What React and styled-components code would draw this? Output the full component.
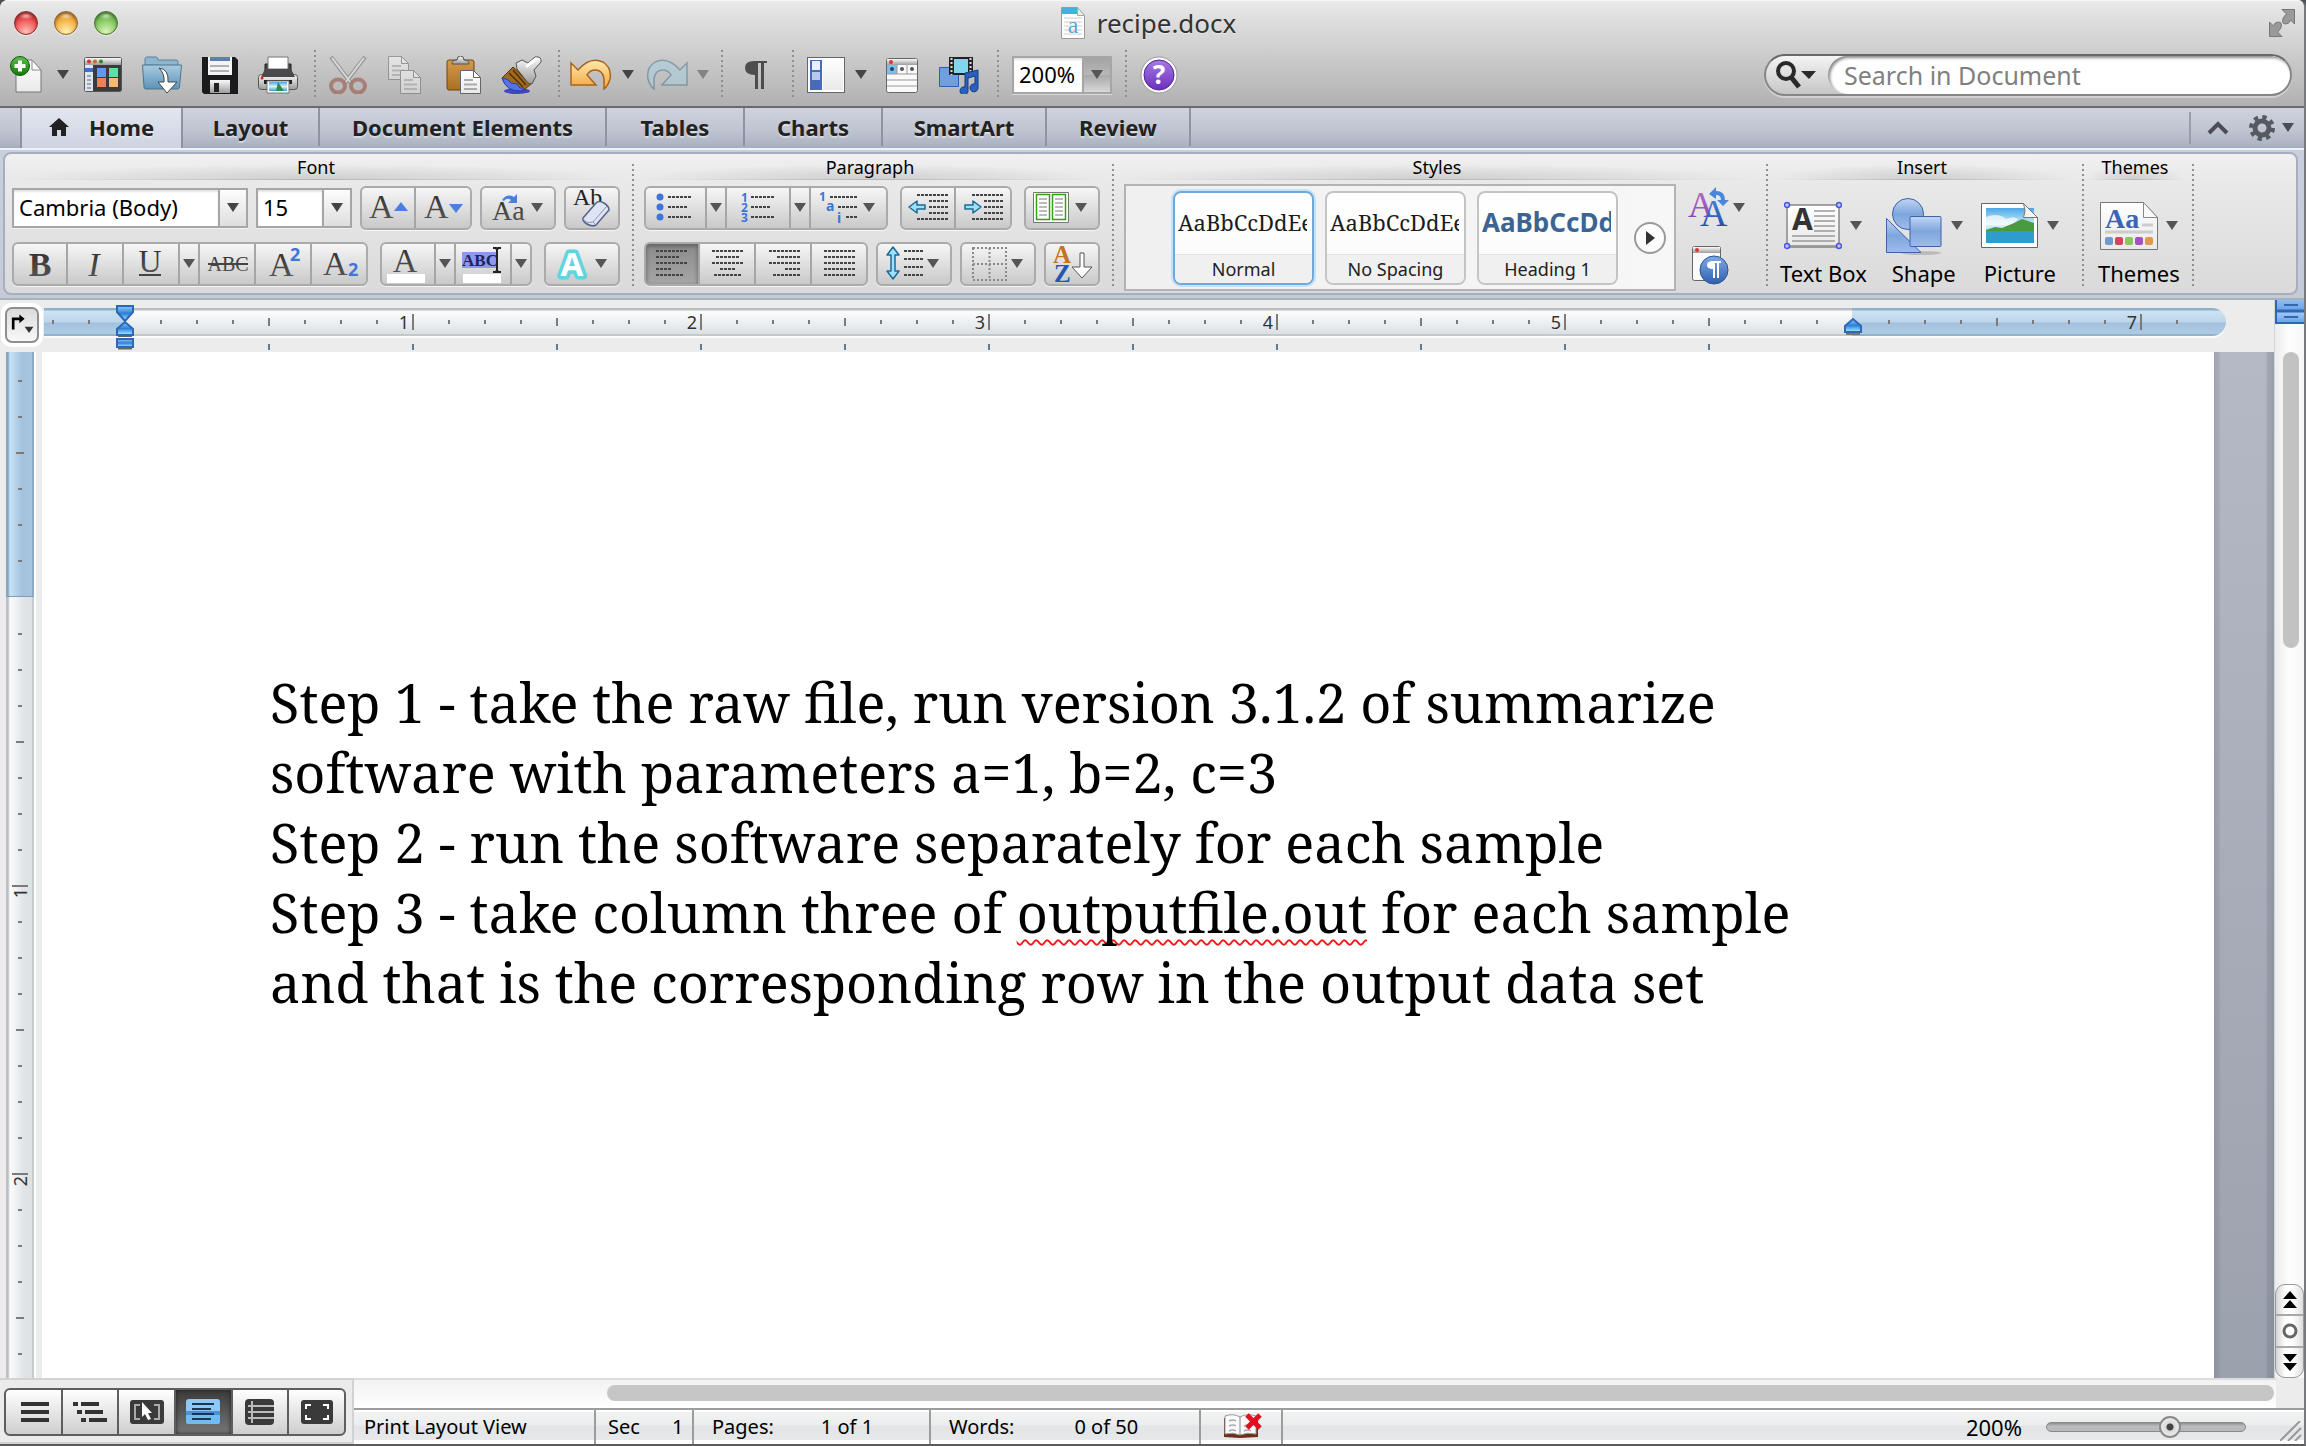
import React from 'react';
import styled, { createGlobalStyle, css } from 'styled-components';

const UI = '"Noto Sans", "Open Sans", sans-serif';
const SERIF = '"Liberation Serif", serif';
const DOC = '"Noto Serif", "DejaVu Serif Condensed", "DejaVu Serif", serif';

const GlobalStyle = createGlobalStyle`
  *, *::before, *::after { box-sizing: border-box; }
  body { margin: 0; font-family: ${UI}; color: #000; background: #4c5157; }
  button, input { font-family: inherit; color: inherit; margin: 0; }
  button { border: 0; padding: 0; background: none; }
  svg { display: block; flex: none; }
`;

const Window = styled.div`
  display: flex;
  flex-direction: column;
  height: 100vh;
  border-right: 2px solid #77797c;
  border-bottom: 2px solid #5c5c5e;
  border-radius: 8px 8px 0 0;
  overflow: hidden;
  background: #ececec;
`;

/* ---------- title bar and toolbar ---------- */

const Header = styled.header`
  background: linear-gradient(#ececec 0, #e4e4e4 8px, #b1b1b1 100%);
  border-top: 1px solid #f7f7f7;
  border-bottom: 2px solid #6a6a6a;
`;

const TitleBar = styled.div`
  display: grid;
  grid-template-columns: 1fr auto 1fr;
  align-items: center;
  height: 43px;
  padding: 0 9px 0 14px;
`;

const Lights = styled.div`
  display: flex;
  gap: 16px;
`;

const Light = styled.button`
  width: 24px;
  height: 24px;
  border-radius: 50%;
  border: 1px solid ${(p) => p.$edge};
  background: radial-gradient(ellipse 8px 4px at 50% 15%, #ffffffc0, #ffffff00),
    radial-gradient(circle at 50% 90%, ${(p) => p.$glow} 0, ${(p) => p.$tone} 60%, ${(p) => p.$edge} 110%);
  box-shadow: inset 0 2px 3px ${(p) => p.$edge}, 0 1px 0 #ffffff90;
`;

const Title = styled.h1`
  display: flex;
  align-items: center;
  gap: 12px;
  margin: 0;
  padding-right: 12px;
  font-size: 26px;
  line-height: 36px;
  font-weight: 400;
  color: #333;
  text-shadow: 0 1px 0 #ffffff80;
`;

const FullScreen = styled.button`
  justify-self: end;
`;

const Toolbar = styled.div`
  display: flex;
  align-items: center;
  height: 62px;
  padding-right: 12px;
`;

const Tool = styled.button`
  flex: none;
  display: flex;
  align-items: center;
  justify-content: center;
  width: ${(p) => p.$w}px;
  height: 50px;
  opacity: ${(p) => (p.disabled ? 0.5 : 1)};
`;

const dots = css`
  width: 2px;
  background: repeating-linear-gradient(#8e8e8e 0 2px, transparent 2px 5px);
`;

const ToolSplit = styled.span`
  flex: none;
  display: flex;
  justify-content: center;
  width: ${(p) => p.$w}px;
  height: 50px;
  &::before { content: ''; ${dots} }
`;

const Combo = styled.div`
  display: flex;
  flex: none;
  width: ${(p) => p.$w}px;
  height: ${(p) => (p.$tool ? 38 : 40)}px;
  margin-left: ${(p) => (p.$tool ? 7 : 0)}px;
  border: 2px solid #a6a6a6;
  background: #fff;
  box-shadow: 0 1px 0 #ffffff80;
`;

const ComboInput = styled.input`
  flex: 1;
  min-width: 0;
  width: 0;
  border: 0;
  outline: 0;
  padding: 0 0 2px 5px;
  font-size: 22px;
  background: none;
  box-shadow: inset 0 2px 2px #e4e4e4;
`;

const ComboButton = styled.button`
  display: flex;
  align-items: center;
  justify-content: center;
  width: 28px;
  border-left: 2px solid #a6a6a6;
  background: ${(p) => (p.$dark ? 'linear-gradient(#a4a4a4, #b8b8b8 50%, #a9a9a9 51%, #d8d8d8)' : 'linear-gradient(#fdfdfd, #dedede)')};
`;

const Spacer = styled.div`
  flex: 1;
`;

const Search = styled.div`
  display: flex;
  align-items: stretch;
  width: 528px;
  height: 42px;
  border: 2px solid #868686;
  border-top-color: #686868;
  border-radius: 21px;
  overflow: hidden;
  background: linear-gradient(#f4f4f4, #c6c6c6);
  box-shadow: 0 2px 0 #ffffff60;
`;

const SearchMenu = styled.button`
  display: flex;
  align-items: center;
  width: 62px;
  padding-left: 9px;
`;

const SearchInput = styled.input`
  flex: 1;
  min-width: 0;
  border: 0;
  outline: 0;
  border-radius: 19px;
  padding: 0 16px;
  font-size: 25px;
  background: #fff;
  box-shadow: inset 2px 2px 3px #8a8a8a;
  &::placeholder { color: #808080; opacity: 1; }
`;

/* ---------- ribbon tabs ---------- */

const Tabs = styled.nav`
  display: flex;
  height: 40px;
  padding-left: 20px;
  background: linear-gradient(#cfd3de, #bfc4d0 60%, #abb2c2);
  border-bottom: 2px solid #a6aec1;
`;

const Tab = styled.button`
  display: flex;
  align-items: center;
  justify-content: center;
  gap: 20px;
  width: ${(p) => p.$w}px;
  height: 38px;
  border-right: 2px solid #8d93a2;
  font-size: 22px;
  line-height: 30px;
  font-weight: 700;
  color: #222;
  text-shadow: 0 2px 0 #ffffff70;
  ${(p) => p.$on && css`
    height: 42px;
    padding-bottom: 4px;
    border-left: 2px solid #8d93a2;
    background: linear-gradient(#e2e6ef, #ccd2e0);
  `}
`;

const TabTools = styled.div`
  display: flex;
  align-items: center;
  gap: 20px;
  margin: 4px 10px 2px auto;
  padding-left: 16px;
  border-left: 2px solid #989eac;
`;

const TabTool = styled.button`
  display: flex;
  align-items: center;
  gap: 7px;
`;

/* ---------- ribbon ---------- */

const RibbonBack = styled.div`
  padding: 4px 6px 3px 3px;
  background: linear-gradient(#eef1f7 0 2px, #c8cfdd 2px, #c5cad7);
  border-bottom: 2px solid #a9b0be;
`;

const Ribbon = styled.div`
  display: flex;
  height: 143px;
  padding-left: 1px;
  border: 2px solid #a7aebf;
  border-radius: 8px;
  background: linear-gradient(#f0f0f0, #e9e9e9 20%, #dadada);
`;

const Group = styled.section`
  flex: none;
  width: ${(p) => p.$w}px;
`;

const GroupTitle = styled.h2`
  margin: 0 9px 0 3px;
  height: 26px;
  padding-top: 1px;
  font-size: 18px;
  line-height: 24px;
  font-weight: 400;
  text-align: center;
  border-bottom: 1px solid;
  border-image: linear-gradient(90deg, transparent, #b4b4b4 50%, transparent) 1;
  background: radial-gradient(ellipse 50% 60% at 50% 100%, #cfcfcf, transparent);
`;

const GroupDots = styled.span`
  ${dots}
  flex: none;
  margin-top: 10px;
  height: 124px;
`;

const Rows = styled.div`
  display: flex;
  flex-direction: column;
  gap: 12px;
  padding: 6px 0 0 ${(p) => p.$left}px;
`;

const Row = styled.div`
  display: flex;
  align-items: center;
  height: 44px;
  gap: ${(p) => p.$gap}px;
`;

const Segments = styled.div`
  display: flex;
  height: 44px;
  border: 2px solid #ababab;
  border-radius: 6px;
  overflow: hidden;
  background: linear-gradient(#f6f6f6, #c9c9c9);
  box-shadow: 0 1px 0 #ffffffa0;
`;

const Segment = styled.button`
  width: ${(p) => p.$w}px;
  height: 40px;
  border-right: 2px solid #a6a6a6;
  &:first-child { width: ${(p) => p.$w - 2}px; }
  &:last-child { border-right: 0; width: ${(p) => p.$w - 2}px; }
  &:only-child { width: ${(p) => p.$w - 4}px; }
  svg { margin-top: -2px; }
  &:first-child svg { margin-left: -2px; }
  ${(p) => p.$on && css`
    background: linear-gradient(#8a8a8a, #a6a6a6);
    box-shadow: inset 0 2px 4px #5d5d5d;
  `}
`;

const StyleRow = styled.div`
  display: flex;
  gap: 12px;
  padding: 4px 0 0 10px;
`;

const Gallery = styled.div`
  display: flex;
  align-items: center;
  gap: 11px;
  width: 552px;
  height: 107px;
  padding: 0 8px 0 47px;
  border: 2px solid #b3b3b3;
  background: linear-gradient(90deg, #f0f0f0, #f7f7f7);
`;

const Card = styled.button`
  display: flex;
  flex-direction: column;
  width: 141px;
  height: 94px;
  overflow: hidden;
  border: 2px solid ${(p) => (p.$on ? '#72a8d8' : '#c4c4c4')};
  border-radius: 8px;
  box-shadow: ${(p) => (p.$on ? '0 0 0 2px #c4e2f8' : 'none')};
  background: linear-gradient(#fff, #fafafa);
`;

const Sample = styled.span`
  align-self: stretch;
  height: 61px;
  margin: 0 5px 0 3px;
  padding-top: 8px;
  overflow: hidden;
  text-align: left;
  white-space: nowrap;
  font-family: ${(p) => (p.$head ? UI : DOC)};
  font-size: ${(p) => (p.$head ? 26 : 22)}px;
  font-weight: ${(p) => (p.$head ? 700 : 400)};
  color: ${(p) => (p.$head ? '#3c6492' : '#1c1c1c')};
  line-height: 42px;
`;

const CardName = styled.span`
  width: 100%;
  flex: 1;
  font-size: 18px;
  line-height: 28px;
  color: #222;
  border-top: 1px solid #e2e2e2;
  background: #f0f0f0;
`;

const More = styled.button`
  width: 32px;
  height: 32px;
  flex: none;
  margin-left: 5px;
  border: 2px solid #9a9a9a;
  border-radius: 50%;
  background: #fcfcfc;
  svg { margin: 0 0 0 10px; }
`;

const SideTools = styled.div`
  display: flex;
  flex-direction: column;
  gap: 12px;
  padding-top: 2px;
`;

const Plain = styled.button``;

const BigRow = styled.div`
  display: flex;
  gap: 18px;
  padding: 16px 0 0 ${(p) => p.$left}px;
`;

const Big = styled.button`
  display: flex;
  flex-direction: column;
  align-items: center;
  min-width: ${(p) => p.$w}px;
  font-size: 22px;
  line-height: 34px;
  white-space: nowrap;
`;

const BigTop = styled.span`
  display: flex;
  align-items: center;
  gap: 8px;
  height: 60px;
`;

/* ---------- rulers ---------- */

const Workspace = styled.div`
  display: flex;
  flex: 1;
  min-height: 0;
`;

const Sheet = styled.main`
  display: flex;
  flex-direction: column;
  flex: 1;
  min-width: 0;
`;

const RulerRow = styled.div`
  display: flex;
  height: 52px;
  padding-right: 48px;
  background: #ececec;
`;

const TabStop = styled.button`
  display: flex;
  align-items: center;
  justify-content: center;
  width: 42px;
  height: 44px;
  margin: 3px 1px 0 1px;
  border-radius: 10px;
  background: #fff;
  svg {
    border: 2px solid #8f8f8f;
    border-radius: 7px;
    background: linear-gradient(#dcdcdc, #f8f8f8);
  }
`;

const RulerStack = styled.div`
  flex: 1;
  min-width: 0;
  padding-top: 8px;
`;

const RulerBar = styled.div`
  display: flex;
  height: 28px;
  border-radius: 0 14px 14px 0;
  overflow: hidden;
  box-shadow: 0 2px 0 #fbfbfb;
`;

const RulerOuter = styled.div`
  position: relative;
`;

const blueAcross = 'linear-gradient(#8fb0cc 0 2px, #cde3f4 3px, #bcd5ea 14px, #a3c1de 15px, #aecbe5 26px, #93b0cc 26px)';
const paleAcross = 'linear-gradient(#b9bec3 0 2px, #fdfdfd 3px, #eceff1 15px, #dbe0e4 26px, #c2c8cc 26px)';
const blueDown = 'linear-gradient(90deg, #86a5bf 0 2px, #c9e3f6 4px, #a4c1dd 16px, #a9c5e0 26px, #8eabc9 26px)';
const paleDown = 'linear-gradient(90deg, #bcc0c4 0 2px, #fcfcfc 4px, #e0e4e7 18px, #dce1e4 26px, #c5cacd 26px)';

const Zone = styled.div`
  display: flex;
  justify-content: ${(p) => (p.$end ? 'flex-end' : 'flex-start')};
  flex: ${(p) => (p.$w ? 'none' : 1)};
  width: ${(p) => (p.$w ? `${p.$w}px` : 'auto')};
  min-width: 0;
  overflow: hidden;
  background: ${(p) => (p.$blue ? blueAcross : paleAcross)};
`;

const tickLength = { none: 0, small: 4, half: 8, inch: 16 };

const Cell = styled.span`
  display: flex;
  flex: none;
  align-items: center;
  justify-content: space-between;
  width: 36px;
  padding-right: 3px;
  font-size: 18px;
  color: #333;
  &::before {
    content: '';
    width: 2px;
    height: ${(p) => tickLength[p.$tick]}px;
    background: #7d7a78;
  }
`;

const Stops = styled.div`
  display: flex;
  padding: 8px 0 0 80px;
`;

const Stop = styled.span`
  width: 144px;
  height: 6px;
  border-left: 2px solid #66788f;
  &:first-child { border-color: transparent; }
`;

const Marker = styled.span`
  position: absolute;
  left: ${(p) => p.$x}px;
  top: ${(p) => p.$y}px;
`;

const PageRow = styled.div`
  display: flex;
  flex: 1;
  min-height: 0;
  overflow: hidden;
`;

const SideRuler = styled.div`
  display: flex;
  flex-direction: column;
  flex: none;
  width: 30px;
  margin: 0 6px;
  border-right: 2px solid #fff;
`;

const SideZone = styled.div`
  display: flex;
  flex-direction: column;
  justify-content: ${(p) => (p.$blue ? 'flex-end' : 'flex-start')};
  flex: ${(p) => (p.$blue ? 'none' : 1)};
  height: ${(p) => (p.$blue ? '245px' : 'auto')};
  min-height: 0;
  overflow: hidden;
  border-bottom: ${(p) => (p.$blue ? '1px solid #7f9cbd' : '0')};
  background: ${(p) => (p.$blue ? blueDown : paleDown)};
`;

const SideCell = styled.span`
  display: flex;
  flex: none;
  flex-direction: column;
  align-items: center;
  gap: 1px;
  height: 36px;
  font-size: 18px;
  line-height: 20px;
  color: #333;
  &::before {
    content: '';
    width: ${(p) => tickLength[p.$tick]}px;
    height: 2px;
    background: #7d7a78;
  }
`;

const SideNumber = styled.span`
  writing-mode: sideways-lr;
`;

/* ---------- document ---------- */

const Page = styled.article`
  flex: 1;
  min-width: 0;
  padding: 315px 0 0 228px;
  background: #fff;
  font-family: ${DOC};
  font-size: 54px;
  line-height: 70px;
`;

const Para = styled.p`
  margin: 0;
  max-width: 1583px;
`;

const Misspelt = styled.span`
  text-decoration: underline wavy #f01818 2px;
  text-decoration-skip-ink: none;
  text-underline-offset: 6px;
`;

const Gutter = styled.div`
  flex: none;
  width: 60px;
  background: linear-gradient(90deg, #5a617040 0, #5a617020 5px, transparent 7px 52px, #5a617030 53px, #5a617050 60px),
    linear-gradient(#b4b9c5, #9ba1ad);
`;

const ScrollColumn = styled.div`
  display: flex;
  flex-direction: column;
  flex: none;
  width: 30px;
  border-left: 1px solid #d5d5d5;
  background: linear-gradient(90deg, #ececec, #fdfdfd 50%, #f7f7f7);
`;

const SplitBox = styled.button`
  height: 24px;
  border: 2px solid #2f67b5;
  border-top: 0;
  border-right: 0;
  background: linear-gradient(transparent 4px, #3467b0 4px 6px, transparent 6px 10px, #2f67b5 10px 12px, transparent 12px 16px, #3467b0 16px 18px, transparent 18px) 50% / 14px 100% no-repeat, linear-gradient(#8fbcf0, #6ea5e8 9px, #2f67b5 10px 12px, #9cc6f5 13px, #6ea5e8);
`;

const ScrollTrack = styled.div`
  flex: 1;
  padding: 28px 0 0 8px;
`;

const ScrollThumb = styled.div`
  width: 16px;
  height: 296px;
  border-radius: 8px;
  background: #c2c2c2;
`;

const Browse = styled.div`
  display: flex;
  flex-direction: column;
  height: 94px;
  border: 1px solid #999;
  border-radius: 10px;
  overflow: hidden;
  background: linear-gradient(90deg, #d4d4d4, #fff 35%, #fff 60%, #dedede);
`;

const BrowseButton = styled.button`
  display: flex;
  align-items: center;
  justify-content: center;
  flex: 1;
  & + & { border-top: 2px solid #a8a8a8; }
`;

/* ---------- bottom bars ---------- */

const Footer = styled.footer`
  display: flex;
  height: 66px;
`;

const Views = styled.div`
  width: 354px;
  padding: 8px 4px 0;
  border: 2px solid #d2d2d2;
  border-left: 0;
  background: #ebebeb;
`;

const ViewGroup = styled.div`
  display: flex;
  height: 48px;
  width: 342px;
  border: 2px solid #5e5e5e;
  border-radius: 6px;
  overflow: hidden;
  background: linear-gradient(#fff, #cecece);
`;

const View = styled.button`
  display: flex;
  align-items: center;
  justify-content: center;
  flex: 1;
  & + & { border-left: 2px solid #5e5e5e; }
  ${(p) => p.$on && css`
    background: linear-gradient(#3b3b3b, #767676);
    box-shadow: inset 0 0 4px #222;
  `}
`;

const Bars = styled.div`
  flex: 1;
  min-width: 0;
`;

const HScroll = styled.div`
  height: 30px;
  margin-right: 28px;
  padding: 5px 2px 0 253px;
  border-top: 2px solid #dcdcdc;
  background: linear-gradient(#f2f2f2, #fff);
`;

const HThumb = styled.div`
  height: 16px;
  border-radius: 8px;
  background: #c6c6c6;
`;

const Status = styled.div`
  display: flex;
  height: 36px;
  border-top: 2px solid #9c9c9c;
  background: #fff;
  font-size: 20px;
  line-height: 33px;
`;

const StatusCell = styled.div`
  display: flex;
  flex: ${(p) => (p.$w ? 'none' : 1)};
  width: ${(p) => (p.$w ? `${p.$w}px` : 'auto')};
  gap: ${(p) => p.$gap || 0}px;
  padding-left: ${(p) => p.$pad || 0}px;
  white-space: pre;
  border-right: ${(p) => (p.$w ? '2px solid #9c9c9c' : '0')};
  background: linear-gradient(#fff 0 2px, #f1f3f3 2px, #ebedee 15px, #e2e4e6 16px, #e6e8ea 30px, #fff 30px);
  svg { margin: 2px 0 0; }
`;

const Zoom = styled.label`
  display: flex;
  align-items: center;
  gap: 24px;
  margin-left: auto;
  font-size: 22px;
  input {
    appearance: none;
    width: 200px;
    height: 10px;
    border-radius: 5px;
    background: linear-gradient(#8f8f8f, #bdbdbd 40%, #b8b8b8);
    border: 1px solid #8a8a8a;
  }
  input::-webkit-slider-thumb {
    appearance: none;
    width: 22px;
    height: 22px;
    border-radius: 50%;
    border: 2px solid #8a8a8a;
    background: radial-gradient(circle, #444 0 3px, #d8d8d8 4px, #fafafa);
  }
`;

const Grip = styled.span`
  align-self: flex-end;
  margin: 0 2px 3px 34px;
`;

/* ---------- drawings ---------- */

const Svg = ({ w, h, children }) => (
  <svg width={w} height={h} viewBox={`0 0 ${w} ${h}`} aria-hidden="true">{children}</svg>
);

const Grad = ({ id, stops, across }) => (
  <linearGradient id={id} x1="0" y1="0" x2={across ? 1 : 0} y2={across ? 0 : 1}>
    {stops.map((c, i) => <stop key={c + i} offset={i / (stops.length - 1)} stopColor={c} />)}
  </linearGradient>
);

const Defs = styled.svg`
  position: absolute;
  width: 0;
  height: 0;
`;

const Paints = () => (
  <Defs aria-hidden="true">
    <defs>
      <Grad id="paper" stops={['#ffffff', '#e9e9e9']} />
      <Grad id="green" stops={['#5cc04a', '#14780f']} />
      <Grad id="folder" stops={['#a9cbe0', '#5b93b8']} />
      <Grad id="gold" stops={['#ffe9b0', '#f3a63c']} />
      <Grad id="board" stops={['#d39a4c', '#a9701f']} />
      <Grad id="metal" stops={['#fafafa', '#9c9c9c']} />
      <Grad id="violet" stops={['#a77be0', '#6a2fc0']} />
      <Grad id="sky" stops={['#4aa8e8', '#d8f2fb', '#3aa0d4']} />
      <Grad id="shape" stops={['#c0d6f4', '#7fa6dd', '#9dbcea']} />
      <Grad id="azure" stops={['#8ecdf6', '#2f7fdc', '#a8f0ff']} />
      <Grad id="ball" stops={['#7faae8', '#2f5fae']} />
      <Grad id="plum" stops={['#c07ad0', '#7c3aa8']} />
      <Grad id="navy" stops={['#4f8fe0', '#1c449a']} />
      <Grad id="ink" stops={['#2a2a2a', '#5c5c5c']} />
    </defs>
  </Defs>
);

const Tri = ({ x, y, c = '#555' }) => <path d={`M${x - 6} ${y - 4}h12l-6 9z`} fill={c} />;
const Down = ({ c }) => <Svg w={12} h={10}><Tri x={6} y={4} c={c} /></Svg>;

const Dash = ({ x, y, w }) => <path d={`M${x} ${y}h${w}`} stroke="#444" strokeWidth="2" strokeDasharray="3 1" />;
const Glyph = ({ x, y, s = 34, b, i, sans, c = 'url(#ink)', mid, children }) => (
  <text x={x} y={y} fontSize={s} fontFamily={sans ? UI : SERIF} fontWeight={b ? 700 : 400} fontStyle={i ? 'italic' : 'normal'} fill={c} textAnchor={mid ? 'middle' : 'start'}>{children}</text>
);

const NewDoc = () => (
  <Svg w={34} h={40}>
    <path d="M6 5h16l9 10v22H6z" fill="url(#paper)" stroke="#777" />
    <path d="M22 5v10h9z" fill="#fff" stroke="#888" />
    <circle cx="10" cy="11" r="9.5" fill="url(#green)" stroke="#0c5c0a" />
    <path d="M10 5.500v11M4.500 11h11" stroke="#fff" strokeWidth="4" />
  </Svg>
);
const Gallery4 = () => (
  <Svg w={38} h={36}>
    <rect x=".5" y=".5" width="37" height="34" rx="2" fill="#3b3b3e" stroke="#555" />
    <path d="M1 1h36v7H1z" fill="url(#metal)" />
    <circle cx="5" cy="4.500" r="2" fill="#d33" /><circle cx="11" cy="4.500" r="2" fill="#c87020" /><circle cx="17" cy="4.500" r="2" fill="#2a8a20" />
    <path d="M1 8h8v26H1z" fill="#dfe6f2" /><path d="M1 11h8v4H1z" fill="#3b6fd0" />
    <path d="M3 19h4M3 23h4M3 27h4M3 31h4" stroke="#9aa" strokeWidth="2" />
    <path d="M13 11h9v9h-9z" fill="#5c9cf0" /><path d="M25 11h9v9h-9z" fill="#5fe0a0" /><path d="M13 21h9v9h-9z" fill="#f08058" /><path d="M25 21h9v9h-9z" fill="#f8b878" />
  </Svg>
);
const Folder = () => (
  <Svg w={42} h={38}>
    <path d="M4 9V3q0-2 2-2h9q2 0 2 3h18q2 0 2 2v4z" fill="#8fb6cf" stroke="#5d8098" />
    <path d="M1.500 9h39l-2 22q0 2-2 2H5q-2 0-2-2z" fill="url(#folder)" stroke="#4c7590" />
    <path d="M18 12q10 1 9 14h9L26 37 17 26h6q1-8-5-14z" fill="#fff" stroke="#444" />
  </Svg>
);
const Save = () => (
  <Svg w={36} h={37}>
    <path d="M0 0h33l3 3v34H2l-2-2z" fill="#1b1b1d" />
    <path d="M6 0h24v18H6z" fill="#f4f4f4" /><path d="M8 0h20v4H8z" fill="#5a7fb0" />
    <path d="M8 9h19M8 14h19" stroke="#999" strokeWidth="1.500" />
    <path d="M8 23h20v13H8z" fill="url(#metal)" /><path d="M12 26h5v9h-5z" fill="#222" />
  </Svg>
);
const Print = () => (
  <Svg w={40} h={38}>
    <path d="M7 8h26v12H7z" fill="#444" stroke="#222" /><path d="M10 1h20v12H10z" fill="#fff" stroke="#777" />
    <rect x=".5" y="18.500" width="39" height="15" rx="3" fill="url(#metal)" stroke="#555" />
    <path d="M7 13h26l4 8H3z" fill="#4a4a4c" /><path d="M6 24h28v4H6z" fill="#222" />
    <path d="M9 25h22v12H9z" fill="#fff" stroke="#777" /><path d="M11 26h18v9H11z" fill="url(#sky)" /><path d="M20 26l6 9h-8z" fill="#2d8a50" />
    <circle cx="4" cy="22" r="1.500" fill="#d22" />
  </Svg>
);
const Scissors = () => (
  <Svg w={38} h={38}>
    <path d="M2 1l20 26M36 1L16 27" stroke="#666" strokeWidth="4" /><path d="M3 2l19 25M35 2L16 27" stroke="#eee" strokeWidth="2" />
    <ellipse cx="9" cy="30" rx="7" ry="6.500" fill="none" stroke="#8f4436" strokeWidth="4" /><ellipse cx="29" cy="30" rx="7" ry="6.500" fill="none" stroke="#8f4436" strokeWidth="4" />
  </Svg>
);
const Leaf = ({ x, y }) => (
  <g transform={`translate(${x} ${y})`}>
    <path d="M.5.5h13l7 7v16H.5z" fill="url(#paper)" stroke="#666" /><path d="M13.500.5v7h7z" fill="#fff" stroke="#666" />
    <path d="M4 10h9M4 14.500h13M4 19h13" stroke="#aaa" strokeWidth="2" />
  </g>
);
const Copy = () => <Svg w={34} h={38}><Leaf x={0} y={0} /><Leaf x={12} y={14} /></Svg>;
const Paste = () => (
  <Svg w={36} h={38}>
    <rect x="1" y="4" width="27" height="30" rx="2" fill="url(#board)" stroke="#6e4512" />
    <path d="M6 8q0-4 5-4 0-4 3.500-4T18 4q5 0 5 4z" fill="url(#metal)" stroke="#555" /><Leaf x={14} y={14} />
  </Svg>
);
const Brush = () => (
  <Svg w={42} h={38}>
    <ellipse cx="16" cy="35" rx="13" ry="3" fill="#4147c4" />
    <path d="M1 22l11-11 19 16-8 7Q5 35 1 22z" fill="#a3691f" stroke="#553308" />
    <path d="M1 22q7 1 9 5l6 1 3 4h4l-2 3Q5 36 1 22z" fill="#5573e8" stroke="#2b3fa8" />
    <path d="M12 14l13 15M8 17l14 14M17 15l11 12" stroke="#4e3208" strokeWidth="1.500" />
    <path d="M15 7l6-3 6 3 7-6q7-1 6 5l-7 8 2 6-4 8-4-1L16 13z" fill="url(#metal)" stroke="#555" />
    <path d="M26 10l9-7" stroke="#fff" strokeWidth="3" strokeLinecap="round" />
  </Svg>
);
const UndoShape = ({ fill, edge }) => <path d="M1 5l7 7Q20-2 33 4q9 6 7 17-2 7-6 10 0-7 0-10-1-9-9-9-5 0-8 5l9 10H1z" fill={fill} stroke={edge} strokeWidth="1.500" />;
const Undo = () => <Svg w={42} h={34}><UndoShape fill="url(#gold)" edge="#a8641c" /></Svg>;
const Redo = () => <Svg w={42} h={34}><g transform="matrix(-1 0 0 1 42 0)"><UndoShape fill="#a9d0e2" edge="#47748c" /></g></Svg>;
const Pilcrow = ({ c = '#4d4d4d' }) => (
  <Svg w={22} h={30}><path d="M9 1h13v2h-3v26h-3V3h-3v26h-3V15Q0 15 0 8 0 1 9 1z" fill={c} /></Svg>
);
const Sidebar = () => (
  <Svg w={38} h={36}>
    <rect x=".5" y=".5" width="37" height="35" fill="#fff" stroke="#666" /><path d="M16 2h20v31H16z" fill="url(#paper)" />
    <path d="M3 3h12v30H3z" fill="#4a6cb8" /><path d="M5 4h8v9H5z" fill="#e8f0fb" /><path d="M5 15h8v8H5z" fill="#b4cbee" />
  </Svg>
);
const Toolbox = () => (
  <Svg w={32} h={35}>
    <rect x=".5" y=".5" width="31" height="34" rx="2" fill="#fafafa" stroke="#666" /><path d="M1 1h30v6H1z" fill="url(#metal)" /><circle cx="5" cy="4" r="2" fill="#d33" />
    <path d="M1 7h10v9H1z" fill="#7cc0f0" /><path d="M11 7v9M21 7v9M1 16h30M1 22h30M1 28h30" stroke="#999" />
    <circle cx="6" cy="11" r="2" fill="#246" /><circle cx="16" cy="11" r="2" fill="#555" /><circle cx="26" cy="11" r="2" fill="#555" />
  </Svg>
);
const Media = () => (
  <Svg w={40} h={37}>
    <path d="M.5 10.500h19v19H.5z" fill="#6f9fe0" stroke="#2f5fae" />
    <path d="M10 0h24v18H10z" fill="#222" /><path d="M15 2h14v14H15z" fill="#7fd6ee" /><path d="M12.500 1v17M31.500 1v17" stroke="#ddd" strokeWidth="2" strokeDasharray="2 2" />
    <path d="M26 16l13-3v18a4 4 0 1 1-3-4V19l-7 2v13a4 4 0 1 1-3-4z" fill="#2a5fc0" stroke="#123a7c" />
  </Svg>
);
const Help = () => (
  <Svg w={38} h={38}>
    <circle cx="19" cy="19" r="18" fill="#fff" stroke="#999" /><circle cx="19" cy="19" r="15" fill="url(#violet)" stroke="#4d2296" />
    <Glyph x={19} y={28} s={26} b sans mid c="#fff">?</Glyph>
  </Svg>
);
const DocIcon = () => (
  <Svg w={24} h={32}>
    <path d="M.5.5h16l7 8v23H.5z" fill="#fff" stroke="#999" /><path d="M1 1h15v6H1z" fill="#3fb4dc" /><path d="M16.500.5v8h7z" fill="#eee" stroke="#aaa" />
    <path d="M3 11h18M3 15h18M3 19h18M3 23h18M3 27h18" stroke="#ccc" /><Glyph x={12} y={26} s={24} mid c="#58a8d8">a</Glyph>
  </Svg>
);
const Expand = () => (
  <Svg w={26} h={28}>
    <path d="M13 .5h12.500V15l-4-4q-1 4-5 4-3 0-3-3 0-4 4-7z" fill="#999" stroke="#777" />
    <path d="M13 27.500H.5V13l4 4q1-4 5-4 3 0 3 3 0 4-4 7z" fill="#999" stroke="#777" />
  </Svg>
);
const Lens = () => (
  <Svg w={42} h={28}>
    <circle cx="11" cy="10" r="8" fill="none" stroke="#2a2a2a" strokeWidth="4" /><path d="M16 16l8 10" stroke="#2a2a2a" strokeWidth="5" /><path d="M26 10h15l-7 8z" fill="#2a2a2a" />
  </Svg>
);
const House = () => <Svg w={20} h={18}><path d="M10 0l10 9h-3v9h-5v-6H8v6H3V9H0z" fill="#222" /></Svg>;
const Chevron = () => <Svg w={22} h={16}><path d="M2 13l9-9 9 9" fill="none" stroke="#4a4d55" strokeWidth="4" /></Svg>;
const Gear = () => (
  <Svg w={26} h={26}>
    <circle cx="13" cy="13" r="7" fill="none" stroke="#555961" strokeWidth="5" />
    <circle cx="13" cy="13" r="11" fill="none" stroke="#555961" strokeWidth="4" strokeDasharray="4.320 4.320" />
  </Svg>
);

const S = ({ w, on, label, children }) => (
  <Segment $w={w} $on={on} aria-label={label}><Svg w={w} h={44}>{children}</Svg></Segment>
);
const Drop = ({ label }) => <S w={20} label={label}><Tri x={9} y={21} /></S>;

const Lines = ({ x, widths, align }) => widths.map((w, i) => {
  const shift = align === 'end' ? 32 - w : align === 'middle' ? (32 - w) / 2 : 0;
  return <Dash key={i} x={x + shift} y={9 + i * 6} w={w} />;
});
const RAG = [32, 24, 32, 16, 28];

const TextBoxIcon = () => (
  <Svg w={58} h={56}>
    <path d="M3 7h52v41H3z" fill="url(#paper)" stroke="#888" strokeWidth="1.500" /><path d="M3 49h52" stroke="#999" strokeWidth="2" />
    <Glyph x={8} y={32} s={30} b sans c="#333">A</Glyph>
    <path d="M30 13h21M30 18h21M30 23h21M30 28h21M30 33h21M8 38h43M8 43h43" stroke="#999" strokeWidth="1.500" />
    {[[3, 7], [55, 7], [3, 48], [55, 48]].map(([x, y]) => <circle key={`${x}${y}`} cx={x} cy={y} r="2.500" fill="#b8c8ff" stroke="#4a55e0" strokeWidth="1.500" />)}
  </Svg>
);
const ShapeIcon = () => (
  <Svg w={58} h={60}>
    <ellipse cx="36" cy="57" rx="20" ry="2" fill="#bbb" />
    <circle cx="23" cy="18" r="15.500" fill="url(#shape)" stroke="#3d62a8" />
    <path d="M1.500 22.500L36 56.500H1.500z" fill="url(#shape)" stroke="#3d62a8" /><rect x="25" y="20.500" width="31" height="30" rx="1" fill="url(#shape)" stroke="#3d62a8" />
  </Svg>
);
const PictureIcon = () => (
  <Svg w={58} h={48}>
    <path d="M.5 1.500h42l14 14v30H.5z" fill="#fff" stroke="#666" /><path d="M5 6h48v35H5z" fill="url(#sky)" />
    <path d="M5 15q12-5 20 2 8-3 12 0l-6 6H5z" fill="#fff" opacity=".7" />
    <path d="M5 28l9-3 7 1 12-5 8-4 12 4v10H5z" fill="#4a9a3c" /><path d="M5 29h48v12H5z" fill="#2f9cd0" />
    <path d="M42.500 1.500q3 7 0 14h14z" fill="#f4f4f4" stroke="#777" />
  </Svg>
);
const ThemesIcon = () => (
  <Svg w={58} h={50}>
    <path d="M.5 1.500h43l14 15v32H.5z" fill="url(#paper)" stroke="#777" /><path d="M43.500 1.500v15h14z" fill="#fafafa" stroke="#888" />
    <Glyph x={5} y={27} s={28} b c="#3f62b8">Aa</Glyph>
    <path d="M42 24h11M5 31h48" stroke="#ccc" strokeWidth="3" />
    {['#6f9ad0', '#cc4a58', '#86c85c', '#a452c0', '#e09850'].map((c, i) => <rect key={c} x={5 + i * 10} y="36" width="8" height="8" rx="2" fill={c} />)}
  </Svg>
);

const Hourglass = () => (
  <Svg w={18} h={46}>
    <path d="M1 1h16v6l-8 9-8-9z" fill="url(#azure)" stroke="#2c68b8" strokeWidth="2" />
    <path d="M9 17l8 7v6H1v-6z" fill="url(#azure)" stroke="#2c68b8" strokeWidth="2" /><path d="M2 31.500h14" stroke="#666" />
    <path d="M1 34h16v8H1z" fill="url(#azure)" stroke="#2c68b8" strokeWidth="2" /><path d="M2 43.500h14" stroke="#666" strokeWidth="2" />
  </Svg>
);
const Indent = () => <Svg w={18} h={18}><path d="M9 2l8 7v6H1V9z" fill="url(#azure)" stroke="#2c68b8" strokeWidth="2" /><path d="M2 17h14" stroke="#777" strokeWidth="2" /></Svg>;

const tickKind = (n) => (n === 0 ? 'none' : n % 8 === 0 ? 'inch' : n % 4 === 0 ? 'half' : 'small');
const range = (from, to) => Array.from({ length: to - from }, (_, i) => from + i);
const RIGHT_INDENT = 48;

const RulerCells = ({ from, to, hideFirst }) => range(from, to).map((n) => (
  <Cell key={n} $tick={hideFirst && n === from ? 'none' : tickKind(n)}>
    {n > 0 && n + 1 !== RIGHT_INDENT && (n + 1) % 8 === 0 ? (n + 1) / 8 : ''}
  </Cell>
));
const SideCells = ({ from, to }) => range(from, to).map((n) => (
  <SideCell key={n} $tick={tickKind(n)}>{n > 0 && n % 8 === 0 && <SideNumber>{n / 8}</SideNumber>}</SideCell>
));

/* ---------- sections ---------- */

const HeaderBar = () => (
  <Header>
    <TitleBar>
      <Lights>
        <Light aria-label="Close" $tone="#ee4b4b" $glow="#ffc0b8" $edge="#8c2a2a" />
        <Light aria-label="Minimize" $tone="#f2ab3c" $glow="#fff2b0" $edge="#93622a" />
        <Light aria-label="Zoom" $tone="#7cc258" $glow="#dcf6b8" $edge="#48752f" />
      </Lights>
      <Title><DocIcon />recipe.docx</Title>
      <FullScreen aria-label="Full screen"><Expand /></FullScreen>
    </TitleBar>
    <Toolbar role="toolbar">
      <Tool $w={54} aria-label="New"><NewDoc /></Tool>
      <Tool $w={18} aria-label="New options"><Down c="#444" /></Tool>
      <Tool $w={62} aria-label="Templates"><Gallery4 /></Tool>
      <Tool $w={56} aria-label="Open"><Folder /></Tool>
      <Tool $w={59} aria-label="Save"><Save /></Tool>
      <Tool $w={58} aria-label="Print"><Print /></Tool>
      <ToolSplit $w={16} />
      <Tool $w={50} disabled aria-label="Cut"><Scissors /></Tool>
      <Tool $w={64} disabled aria-label="Copy"><Copy /></Tool>
      <Tool $w={54} aria-label="Paste"><Paste /></Tool>
      <Tool $w={62} aria-label="Format painter"><Brush /></Tool>
      <ToolSplit $w={12} />
      <Tool $w={52} aria-label="Undo"><Undo /></Tool>
      <Tool $w={22} aria-label="Undo options"><Down c="#444" /></Tool>
      <Tool $w={56} disabled aria-label="Redo"><Redo /></Tool>
      <Tool $w={16} disabled aria-label="Redo options"><Down c="#444" /></Tool>
      <ToolSplit $w={22} />
      <Tool $w={46} aria-label="Show marks"><Pilcrow /></Tool>
      <ToolSplit $w={28} />
      <Tool $w={38} aria-label="Sidebar"><Sidebar /></Tool>
      <Tool $w={32} aria-label="Sidebar options"><Down c="#444" /></Tool>
      <Tool $w={50} aria-label="Toolbox"><Toolbox /></Tool>
      <Tool $w={64} aria-label="Media"><Media /></Tool>
      <ToolSplit $w={14} />
      <Combo $w={100} $tool>
        <ComboInput aria-label="Zoom" defaultValue="200%" />
        <ComboButton $dark aria-label="Zoom levels"><Down c="#555" /></ComboButton>
      </Combo>
      <ToolSplit $w={28} />
      <Tool $w={38} aria-label="Help"><Help /></Tool>
      <Spacer />
      <Search role="search">
        <SearchMenu aria-label="Search options"><Lens /></SearchMenu>
        <SearchInput aria-label="Search in Document" placeholder="Search in Document" />
      </Search>
    </Toolbar>
  </Header>
);

const TabBar = () => (
  <Tabs>
    <Tab $w={163} $on><House />Home</Tab>
    <Tab $w={137}>Layout</Tab>
    <Tab $w={287}>Document Elements</Tab>
    <Tab $w={138}>Tables</Tab>
    <Tab $w={138}>Charts</Tab>
    <Tab $w={164}>SmartArt</Tab>
    <Tab $w={144}>Review</Tab>
    <TabTools>
      <TabTool aria-label="Collapse ribbon"><Chevron /></TabTool>
      <TabTool aria-label="Ribbon settings"><Gear /><Down c="#4a4d55" /></TabTool>
    </TabTools>
  </Tabs>
);

const FontGroup = () => (
  <Group $w={626}>
    <GroupTitle>Font</GroupTitle>
    <Rows $left={6}>
      <Row $gap={8}>
        <Combo $w={236}><ComboInput aria-label="Font" defaultValue="Cambria (Body)" /><ComboButton aria-label="Fonts"><Down c="#444" /></ComboButton></Combo>
        <Combo $w={96}><ComboInput aria-label="Font size" defaultValue="15" /><ComboButton aria-label="Font sizes"><Down c="#444" /></ComboButton></Combo>
        <Segments>
          <S w={56} label="Grow font"><Glyph x={9} y={32}>A</Glyph><path d="M34 25h14l-7-9z" fill="#4a80dc" /></S>
          <S w={56} label="Shrink font"><Glyph x={8} y={32}>A</Glyph><path d="M33 18h14l-7 9z" fill="#4a80dc" /></S>
        </Segments>
        <Segments>
          <S w={76} label="Change case">
            <Glyph x={12} y={34} s={28}>Aa</Glyph>
            <path d="M22 14q5-7 12-3l3-3v9h-9l3-3q-4-3-7 1z" fill="#4a80dc" /><Tri x={57} y={21} />
          </S>
        </Segments>
        <Segments>
          <S w={56} label="Clear formatting">
            <Glyph x={9} y={19} s={24} c="#222">Ab</Glyph>
            <path d="M19 32l13-15q3-3 8 0t5 7L32 39q-4 2-9-1t-4-6z" fill="#dfe4f2" stroke="#55608a" strokeWidth="1.500" /><path d="M19 32q2 6 10 4l3 3M29 36l14-16" fill="none" stroke="#8a94b8" />
          </S>
        </Segments>
      </Row>
      <Row $gap={12}>
        <Segments>
          <S w={56} label="Bold"><Glyph x={28} y={34} b mid>B</Glyph></S>
          <S w={56} label="Italic"><Glyph x={26} y={34} i mid>I</Glyph></S>
          <S w={56} label="Underline"><Glyph x={26} y={30} s={32} mid>U</Glyph><path d="M15 33h22" stroke="#444" strokeWidth="2" /></S>
          <Drop label="Underline styles" />
          <S w={56} label="Strikethrough"><Glyph x={28} y={29} s={20} mid>ABC</Glyph><path d="M8 22h40" stroke="#444" strokeWidth="2" /></S>
          <S w={56} label="Superscript"><Glyph x={13} y={34}>A</Glyph><Glyph x={34} y={19} s={18} b sans c="#3f74d8">2</Glyph></S>
          <S w={56} label="Subscript"><Glyph x={11} y={33}>A</Glyph><Glyph x={36} y={34} s={18} b sans c="#3f74d8">2</Glyph></S>
        </Segments>
        <Segments>
          <S w={56} label="Font colour"><Glyph x={25} y={30} mid>A</Glyph><path d="M7 32h38v9H7z" fill="#fff" /></S>
          <Drop label="Font colours" />
          <S w={56} label="Highlight">
            <path d="M6 10h36v16H6z" fill="#8f98ea" /><Glyph x={24} y={24} s={17} b mid c="#1c2462">ABC</Glyph>
            <path d="M37 6h3l1 2 1-2h3M41 8v20M37 30h3l1-2 1 2h3" fill="none" stroke="#222" strokeWidth="2" /><path d="M7 32h38v9H7z" fill="#fff" />
          </S>
          <Drop label="Highlight colours" />
        </Segments>
        <Segments>
          <S w={76} label="Text effects">
            <text x="28" y="34" fontSize="33" fontFamily={UI} fontWeight="700" fill="#fff" stroke="#62d4de" strokeWidth="7" paintOrder="stroke" strokeLinejoin="round" textAnchor="middle">A</text>
            <Tri x={57} y={21} />
          </S>
        </Segments>
      </Row>
    </Rows>
  </Group>
);

const BlueArrow = ({ d }) => <path d={d} fill="#9fe0fa" stroke="#1c6a98" strokeWidth="1.500" strokeLinejoin="round" />;

const ParagraphGroup = () => (
  <Group $w={478}>
    <GroupTitle>Paragraph</GroupTitle>
    <Rows $left={10}>
      <Row $gap={12}>
        <Segments>
          <S w={63} label="Bullets">
            {[11, 21, 31].map((y, i) => <g key={y}><circle cx="16" cy={y} r="3.500" fill="#3f74d8" /><Dash x={24} y={y} w={[24, 20, 24][i]} /></g>)}
          </S>
          <Drop label="Bullet styles" />
          <S w={64} label="Numbering">
            {[11, 21, 31].map((y, i) => <g key={y}><Glyph x={14} y={y + 5} s={12} b sans c="#3f74d8">{i + 1}</Glyph><Dash x={24} y={y} w={[24, 20, 24][i]} /></g>)}
          </S>
          <Drop label="Numbering styles" />
          <S w={77} label="Multilevel list">
            <Glyph x={8} y={15} s={12} b sans c="#3f74d8">1</Glyph><Dash x={19} y={11} w={28} />
            <Glyph x={15} y={25} s={14} b sans c="#3f74d8">a</Glyph><Dash x={27} y={21} w={20} />
            <Glyph x={26} y={37} s={14} b sans c="#3f74d8">i</Glyph><Dash x={35} y={31} w={12} /><Tri x={58} y={21} />
          </S>
        </Segments>
        <Segments>
          <S w={56} label="Decrease indent">
            <Dash x={17} y={9} w={31} /><Dash x={29} y={15} w={19} /><Dash x={29} y={21} w={19} /><Dash x={29} y={27} w={19} /><Dash x={17} y={33} w={31} />
            <BlueArrow d="M9 21l8-6v4h8v4h-8v4z" />
          </S>
          <S w={56} label="Increase indent">
            <Dash x={16} y={9} w={31} /><Dash x={28} y={15} w={19} /><Dash x={28} y={21} w={19} /><Dash x={28} y={27} w={19} /><Dash x={16} y={33} w={31} />
            <BlueArrow d="M25 21l-8-6v4H9v4h8v4z" />
          </S>
        </Segments>
        <Segments>
          <S w={76} label="Columns">
            <path d="M9.500 6.500h35v30h-35z" fill="#fff" stroke="#777" /><path d="M12.500 8.500h13v25h-13zM28.500 8.500h13v25h-13z" fill="#fff" stroke="#35a016" strokeWidth="1.500" />
            <path d="M15 13h8M15 17h8M15 21h8M15 25h8M15 29h8M31 13h8M31 17h8M31 21h8M31 25h8M31 29h8" stroke="#bbb" strokeWidth="2" /><Tri x={57} y={21} />
          </S>
        </Segments>
      </Row>
      <Row $gap={8}>
        <Segments>
          <S w={56} on label="Align left"><Lines x={12} widths={RAG} /></S>
          <S w={56} label="Centre"><Lines x={12} widths={RAG} align="middle" /></S>
          <S w={56} label="Align right"><Lines x={13} widths={RAG} align="end" /></S>
          <S w={56} label="Justify"><Lines x={12} widths={[32, 32, 32, 32, 32]} /></S>
        </Segments>
        <Segments>
          <S w={76} label="Line spacing">
            <BlueArrow d="M17 5l6 8h-4v16h4l-6 8-6-8h4V13h-4z" />
            {[9, 17, 25, 33].map((y) => <Dash key={y} x={28} y={y} w={20} />)}<Tri x={57} y={21} />
          </S>
        </Segments>
        <Segments>
          <S w={76} label="Borders">
            <path d="M13 6h33v32H13zM29.500 6v32M13 22h33" fill="none" stroke="#8a8a8a" strokeWidth="2" strokeDasharray="2 2" /><Tri x={57} y={21} />
          </S>
        </Segments>
        <Segments>
          <S w={56} label="Sort">
            <Glyph x={9} y={21} s={25} b c="#c4741c">A</Glyph><Glyph x={10} y={40} s={25} b c="#2256b0">Z</Glyph>
            <path d="M36 11h4v14h8L38 36 28 25h8z" fill="#fff" stroke="#555" />
          </S>
        </Segments>
      </Row>
    </Rows>
  </Group>
);

const StylesGroup = () => (
  <Group $w={652}>
    <GroupTitle>Styles</GroupTitle>
    <StyleRow>
      <Gallery>
        <Card $on><Sample>AaBbCcDdEe</Sample><CardName>Normal</CardName></Card>
        <Card><Sample>AaBbCcDdEe</Sample><CardName>No Spacing</CardName></Card>
        <Card><Sample $head>AaBbCcDd</Sample><CardName>Heading 1</CardName></Card>
        <More aria-label="More styles"><Svg w={10} h={14}><path d="M0 0l9 7-9 7z" fill="#333" /></Svg></More>
      </Gallery>
      <SideTools>
        <Plain aria-label="Change styles">
          <Svg w={60} h={44}>
            <Glyph x={0} y={31} s={36} c="url(#plum)">A</Glyph><Glyph x={12} y={40} s={38} c="url(#navy)">A</Glyph>
            <path d="M21 8l7-7v4q9 0 9 9h4l-6 6-6-6h4q0-5-5-5v4z" fill="#4a86dc" /><Tri x={51} y={21} />
          </Svg>
        </Plain>
        <Plain aria-label="Style inspector">
          <Svg w={44} h={44}>
            <rect x="4.500" y="4.500" width="28" height="34" rx="2" fill="#fafafa" stroke="#666" /><path d="M5 5h27v6H5z" fill="url(#metal)" /><circle cx="9" cy="8" r="2" fill="#d33" />
            <circle cx="26" cy="28" r="14" fill="url(#ball)" stroke="#2a5296" />
            <path d="M25 19h8v2h-2v15h-2V21h-2v15h-2v-9q-6 0-6-4 0-4 6-4z" fill="#fff" />
          </Svg>
        </Plain>
      </SideTools>
    </StyleRow>
  </Group>
);

const BigTool = ({ w, icon, children }) => (
  <Big $w={w}><BigTop>{icon}<Down /></BigTop>{children}</Big>
);

const RibbonBar = () => (
  <RibbonBack>
    <Ribbon>
      <FontGroup /><GroupDots />
      <ParagraphGroup /><GroupDots />
      <StylesGroup /><GroupDots />
      <Group $w={314}>
        <GroupTitle>Insert</GroupTitle>
        <BigRow $left={12}>
          <BigTool w={86} icon={<TextBoxIcon />}>Text Box</BigTool>
          <BigTool w={76} icon={<ShapeIcon />}>Shape</BigTool>
          <BigTool w={76} icon={<PictureIcon />}>Picture</BigTool>
        </BigRow>
      </Group>
      <GroupDots />
      <Group $w={108}>
        <GroupTitle>Themes</GroupTitle>
        <BigRow $left={14}><BigTool w={76} icon={<ThemesIcon />}>Themes</BigTool></BigRow>
      </Group>
      <GroupDots />
    </Ribbon>
  </RibbonBack>
);

const TopRuler = () => (
  <RulerRow>
    <TabStop aria-label="Tab stop">
      <Svg w={34} h={36}><path d="M7 23V11h8" fill="none" stroke="#000" strokeWidth="3" /><path d="M14 6l6 5-6 5z" /><path d="M20 20h10l-5 7z" fill="#333" /></Svg>
    </TabStop>
    <RulerStack>
      <RulerOuter>
        <RulerBar>
          <Zone $blue $w={80} $end><RulerCells from={-2} to={0} /></Zone>
          <Zone $w={1728}><RulerCells from={0} to={RIGHT_INDENT} /></Zone>
          <Zone $blue><RulerCells from={RIGHT_INDENT} to={58} hideFirst /></Zone>
        </RulerBar>
        <Marker $x={72} $y={-3}><Hourglass /></Marker>
        <Marker $x={1800} $y={9}><Indent /></Marker>
      </RulerOuter>
      <Stops>{range(0, 12).map((n) => <Stop key={n} />)}</Stops>
    </RulerStack>
  </RulerRow>
);

const TwoUp = () => <Svg w={16} h={18}><path d="M8 0l7 8H1zM8 9l7 8H1z" /></Svg>;
const TwoDown = () => <Svg w={16} h={18}><path d="M8 9l7-8H1zM8 18l7-8H1z" /></Svg>;

const Body = () => (
  <Workspace>
    <Sheet>
      <TopRuler />
      <PageRow>
        <SideRuler>
          <SideZone $blue><SideCells from={-6} to={0} /></SideZone>
          <SideZone><SideCells from={0} to={22} /></SideZone>
        </SideRuler>
        <Page>
          <Para>Step 1 - take the raw file, run version 3.1.2 of summarize software with parameters a=1, b=2, c=3</Para>
          <Para>Step 2 - run the software separately for each sample</Para>
          <Para>Step 3 - take column three of <Misspelt>outputfile.out</Misspelt> for each sample and that is the corresponding row in the output data set</Para>
        </Page>
        <Gutter />
      </PageRow>
    </Sheet>
    <ScrollColumn>
      <SplitBox aria-label="Split window" />
      <ScrollTrack><ScrollThumb /></ScrollTrack>
      <Browse>
        <BrowseButton aria-label="Previous page"><TwoUp /></BrowseButton>
        <BrowseButton aria-label="Browse by"><Svg w={16} h={16}><circle cx="8" cy="8" r="6" fill="#fff" stroke="#666" strokeWidth="3" /></Svg></BrowseButton>
        <BrowseButton aria-label="Next page"><TwoDown /></BrowseButton>
      </Browse>
    </ScrollColumn>
  </Workspace>
);

const BottomBars = () => (
  <Footer>
    <Views>
      <ViewGroup>
        <View aria-label="Draft"><Svg w={32} h={22}><path d="M4 3h28M4 11h28M4 19h28" stroke="#333" strokeWidth="4" /></Svg></View>
        <View aria-label="Outline"><Svg w={34} h={22}><path d="M0 3h5M8 3h18M4 11h5M12 11h18M8 19h5M16 19h18" stroke="#333" strokeWidth="4" /></Svg></View>
        <View aria-label="Publishing">
          <Svg w={34} h={24}><rect width="34" height="24" rx="3" fill="#3a3a3a" /><path d="M10 5H5v14h5M24 5h5v14h-5" fill="none" stroke="#aaa" strokeWidth="2" /><path d="M12 2l10 11h-4l3 6-3 1-3-6-3 3z" fill="#fff" /></Svg>
        </View>
        <View $on aria-label="Print layout">
          <Svg w={34} h={26}><rect width="34" height="25" rx="3" fill="#8ec8f4" /><path d="M0 12h34v4H0z" fill="#4693dc" /><path d="M0 16h34v6q0 3-3 3H3q-3 0-3-3z" fill="#6fbcf0" /><path d="M6 5h22M6 10h19M6 15h22M6 20h19" stroke="#1d3550" strokeWidth="2" /></Svg>
        </View>
        <View aria-label="Notebook">
          <Svg w={30} h={26}><rect width="29" height="26" rx="4" fill="#3a3a3a" /><path d="M3 7h26M3 13h26M3 19h26M7 2v22" stroke="#bbb" strokeWidth="2" /></Svg>
        </View>
        <View aria-label="Full screen">
          <Svg w={32} h={24}><rect width="32" height="24" rx="3" fill="#3a3a3a" /><path d="M5 9V5h5M22 5h5v4M27 15v4h-5M10 19H5v-4" fill="none" stroke="#fff" strokeWidth="2" /></Svg>
        </View>
      </ViewGroup>
    </Views>
    <Bars>
      <HScroll><HThumb /></HScroll>
      <Status>
        <StatusCell $w={242} $pad={10}>Print Layout View</StatusCell>
        <StatusCell $w={98} $pad={12} $gap={32}><span>Sec</span><span>1</span></StatusCell>
        <StatusCell $w={237} $pad={18} $gap={47}><span>Pages:</span><span>1 of 1</span></StatusCell>
        <StatusCell $w={270} $pad={18} $gap={60}><span>Words:</span><span>0 of 50</span></StatusCell>
        <StatusCell $w={82} $pad={21}>
          <Svg w={42} h={28}>
            <path d="M2 6v19l16 1 18-1V6" fill="#6b2f1a" /><path d="M3 4q8-3 15 1 7-4 16-1v18q-9-2-16 1-7-3-15-1z" fill="#fafafa" stroke="#999" /><path d="M18 5v18" stroke="#888" />
            <path d="M7 9q4-2 7 0M7 14q4-2 7 0M7 19q4-2 7 0M22 14q4-2 7 0M22 19q4-2 7 0" fill="none" stroke="#aaa" strokeWidth="1.500" />
            <path d="M25 3l13 13M38 3L25 16" stroke="#e01020" strokeWidth="5" />
          </Svg>
        </StatusCell>
        <StatusCell>
          <Zoom>200%<input type="range" min="0" max="1000" defaultValue="635" /></Zoom>
          <Grip><Svg w={22} h={20}><path d="M0 20L20 0M8 20L21 7M15 20l6-6" stroke="#999" strokeWidth="2" /></Svg></Grip>
        </StatusCell>
      </Status>
    </Bars>
  </Footer>
);

export default function App() {
  return (
    <>
      <GlobalStyle />
      <Paints />
      <Window>
        <HeaderBar />
        <TabBar />
        <RibbonBar />
        <Body />
        <BottomBars />
      </Window>
    </>
  );
}
